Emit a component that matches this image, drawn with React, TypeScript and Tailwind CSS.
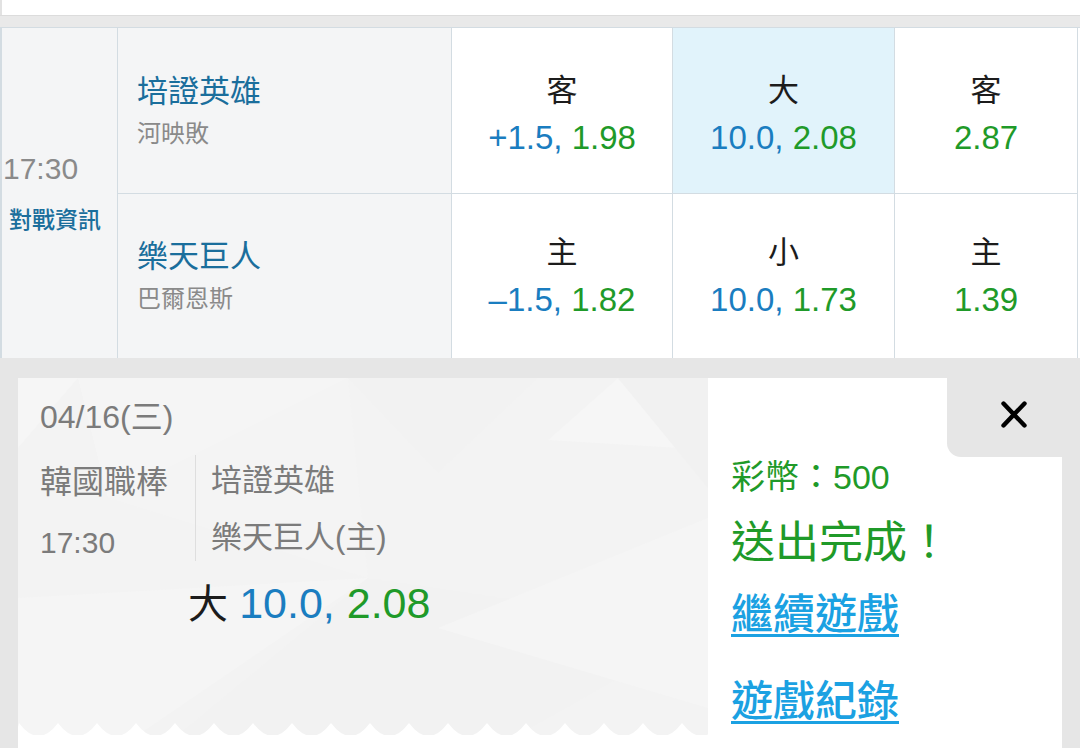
import React from "react";

const teamRows = [
    {
        team: "培證英雄",
        pitcher: "河映敗",
        odds: [
            { label: "客", line: "+1.5,", price: "1.98" },
            { label: "大", line: "10.0,", price: "2.08", active: true },
            { label: "客", price: "2.87" },
        ],
    },
    {
        team: "樂天巨人",
        pitcher: "巴爾恩斯",
        odds: [
            { label: "主", line: "\u20131.5,", price: "1.82" },
            { label: "小", line: "10.0,", price: "1.73" },
            { label: "主", price: "1.39" },
        ],
    },
];

type Odd = { label: string; line?: string; price: string; active?: boolean };

function OddsCell({ odd, width, first }: { odd: Odd; width: string; first: boolean }) {
    return (
        <div
            className={`${width} flex flex-col items-center justify-center border-r border-[#d3dce2] ${first ? "pt-[7px]" : ""} ${odd.active ? "bg-[#e1f3fb]" : "bg-white"}`}
        >
            <div className="text-[31px] leading-[40px] text-[#1c1c1c]">{odd.label}</div>
            <div className="text-[33px] leading-[40px] mt-[7px]">
                {odd.line && <span className="text-[#1a7dc0]">{odd.line} </span>}
                <span className="text-[#1f9a29]">{odd.price}</span>
            </div>
        </div>
    );
}

function Zigzag() {
    // scalloped edge between the patterned ticket and the white bottom
    let d = "M0 14 L0 4";
    for (let x = 1; x < 720; x += 39) {
        d += ` L${x} 0 Q${x + 19.5} 26 ${x + 39} 0`;
    }
    d += " L690 14 Z";
    return (
        <svg width="690" height="14" viewBox="0 0 690 14" className="block">
            <path d={d} fill="#ffffff" />
        </svg>
    );
}

function Pattern() {
    return (
        <svg width="690" height="357" viewBox="0 0 690 357" className="block">
            <rect width="690" height="357" fill="#f3f3f3" />
            <polygon points="0,0 60,0 0,70" fill="#f6f6f6" />
            <polygon points="60,0 330,0 90,120" fill="#f5f5f5" />
            <polygon points="330,0 520,0 420,95" fill="#f2f2f2" />
            <polygon points="530,62 600,0 662,70" fill="#f6f6f6" />
            <polygon points="600,0 690,0 690,110" fill="#f1f1f1" />
            <polygon points="0,220 350,200 120,357 0,357" fill="#f5f5f5" />
            <polygon points="350,200 690,250 500,357 160,357" fill="#f2f2f2" />
            <polygon points="420,250 690,140 690,330" fill="#f5f5f5" />
            <polygon points="90,120 330,0 350,200" fill="#f4f4f4" />
        </svg>
    );
}

export default function App() {
    return (
        <div className="w-[1080px] h-[748px] overflow-hidden bg-white font-['Liberation_Sans','Noto_Sans_CJK_TC',sans-serif]">
            {/* top strip */}
            <div className="h-[15px] border-l-2 border-[#e2e2e2]"></div>
            <div className="h-[12px] bg-[#e9e9e9] border-t border-[#dcdcdc]"></div>

            {/* match table */}
            <div className="flex h-[331px] border-t border-[#d3dce2] pr-[2px]">
                <div className="w-[118px] bg-[#f4f5f6] border-l-2 border-r border-[#d3dce2] flex flex-col justify-center pl-[1px]">
                    <div className="text-[30px] leading-[34px] text-[#8a8a8a]">17:30</div>
                    <div className="text-[23px] leading-[30px] text-[#1a6e9c] font-medium mt-[19px] pl-[6px]">對戰資訊</div>
                </div>
                <div className="flex-1 flex flex-col">
                    {teamRows.map((row, i) => (
                        <div key={i} className={`flex ${i === 0 ? "h-[166px] border-b border-[#d3dce2]" : "flex-1"}`}>
                            <div className="w-[334px] bg-[#f4f5f6] border-r border-[#d3dce2] flex flex-col justify-center pl-[19px]">
                                <div className="text-[31px] leading-[38px] text-[#1a6e9c]">{row.team}</div>
                                <div className="text-[24px] leading-[30px] text-[#8a8a8a] mt-[8px]">{row.pitcher}</div>
                            </div>
                            <OddsCell odd={row.odds[0]} width="w-[221px]" first={i === 0} />
                            <OddsCell odd={row.odds[1]} width="w-[222px]" first={i === 0} />
                            <OddsCell odd={row.odds[2]} width="flex-1" first={i === 0} />
                        </div>
                    ))}
                </div>
            </div>

            {/* bet ticket */}
            <div className="bg-[#e6e6e6] pt-[20px] px-[18px]">
                <div className="flex h-[400px]">
                    <div className="relative w-[690px] bg-white">
                        <div className="absolute left-0 top-0">
                            <Pattern />
                            <div className="-mt-[12px]">
                                <Zigzag />
                            </div>
                        </div>
                        <div className="relative pl-[22px] pt-[20px] text-[#7b7b7b]">
                            <div className="text-[32px] leading-[38px]">04/16(三)</div>
                            <div className="flex mt-[19px]">
                                <div className="w-[155px]">
                                    <div className="text-[32px] leading-[54px]">韓國職棒</div>
                                    <div className="text-[30px] leading-[54px] mt-[7px]">17:30</div>
                                </div>
                                <div className="border-l border-[#dedede] pl-[15px] h-[106px]">
                                    <div className="text-[31px] leading-[52px]">培證英雄</div>
                                    <div className="text-[31px] leading-[52px] mt-[5px]">樂天巨人(主)</div>
                                </div>
                            </div>
                            <div className="ml-[148px] mt-[8px] text-[43px] leading-[50px]">
                                <span className="text-[#1c1c1c] text-[40px]">大 </span>
                                <span className="text-[#1a7dc0]">10.0, </span>
                                <span className="text-[#1f9a29]">2.08</span>
                            </div>
                        </div>
                    </div>

                    <div className="relative flex-1 bg-white pl-[23px]">
                        <button className="absolute right-0 top-0 w-[115px] h-[79px] bg-[#e6e6e6] rounded-bl-[14px] flex items-start pl-[53px] pt-[22px]">
                            <svg width="28" height="29" viewBox="0 0 28 29">
                                <path d="M3.5 3.5 L24.5 25.5 M24.5 3.5 L3.5 25.5" stroke="#000" strokeWidth="4.4" strokeLinecap="round" />
                            </svg>
                        </button>
                        <div className="pt-[79px] text-[#1f9a29]">
                            <div className="text-[34px] leading-[40px]">彩幣：500</div>
                            <div className="text-[44px] leading-[50px] mt-[21px]">送出完成！</div>
                        </div>
                        <div className="text-[#1ba1e2] text-[42px] leading-[50px] font-medium underline underline-offset-[5px] decoration-[3px]">
                            <div className="mt-[22px]">繼續遊戲</div>
                            <div className="mt-[37px]">遊戲紀錄</div>
                        </div>
                    </div>
                </div>
            </div>
        </div>
    );
}
